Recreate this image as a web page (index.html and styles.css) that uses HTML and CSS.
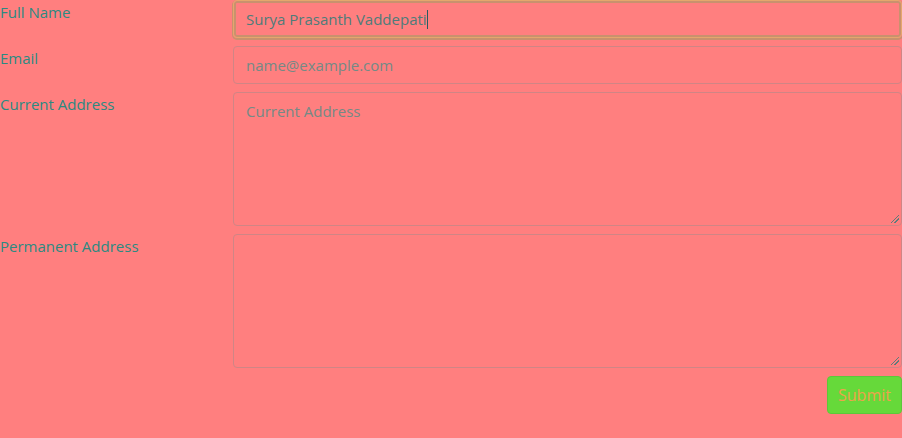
FILE: index.html
```html
<!DOCTYPE html>
<html>
<head>
<meta charset="utf-8">
<link rel="stylesheet" href="styles.css">
</head>
<body>
<form class="form">
  <div class="row">
    <label class="label">Full Name</label>
    <div class="field focused">Surya Prasanth Vaddepati<span class="caret"></span></div>
  </div>
  <div class="row">
    <label class="label">Email</label>
    <div class="field placeholder">name@example.com</div>
  </div>
  <div class="row">
    <label class="label">Current Address</label>
    <div class="field area placeholder">Current Address<span class="grip"></span></div>
  </div>
  <div class="row">
    <label class="label">Permanent Address</label>
    <div class="field area"><span class="grip"></span></div>
  </div>
  <div class="actions">
    <button type="button" class="btn">Submit</button>
  </div>
</form>
</body>
</html>
```
FILE: styles.css
```css
html, body {
  margin: 0;
  padding: 0;
  background: #ff7f7f;
}
body {
  font-family: "Open Sans", "Noto Sans", sans-serif;
  font-size: 15px;
  color: #2b8a82;
  width: 902px;
  height: 438px;
  overflow: hidden;
}
.form {
  display: flex;
  flex-direction: column;
  gap: 8px;
}
.row {
  display: grid;
  grid-template-columns: 233px 669px;
}
.label {
  line-height: 24px;
}
.field {
  box-sizing: border-box;
  height: 38px;
  border: 1px solid #cf8585;
  border-radius: 4px;
  padding: 6px 12px;
  line-height: 24px;
  color: #4e7c7a;
  position: relative;
}
.field.placeholder {
  color: #748a86;
}
.field.focused {
  border-color: #e6a66c;
  box-shadow: inset 0 0 0 2px #c9916e, 0 1px 0 1px #c9916e;
}
.field.area {
  height: 134px;
}
.caret {
  display: inline-block;
  width: 1px;
  height: 19px;
  background: #2b5a60;
  vertical-align: -4px;
}
.grip {
  position: absolute;
  right: 2px;
  bottom: 2px;
  width: 8px;
  height: 8px;
  background: linear-gradient(135deg, transparent 0 45%, #5e7c7c 45% 52%, transparent 52% 68%, #5e7c7c 68% 76%, transparent 76%);
}
.actions {
  display: flex;
  justify-content: flex-end;
}
.btn {
  box-sizing: border-box;
  height: 38px;
  width: 75px;
  border: 1px solid #5cc83a;
  border-radius: 4px;
  background: #66d93a;
  color: #eda24c;
  font-family: inherit;
  font-size: 16px;
  padding: 0;
}
```
